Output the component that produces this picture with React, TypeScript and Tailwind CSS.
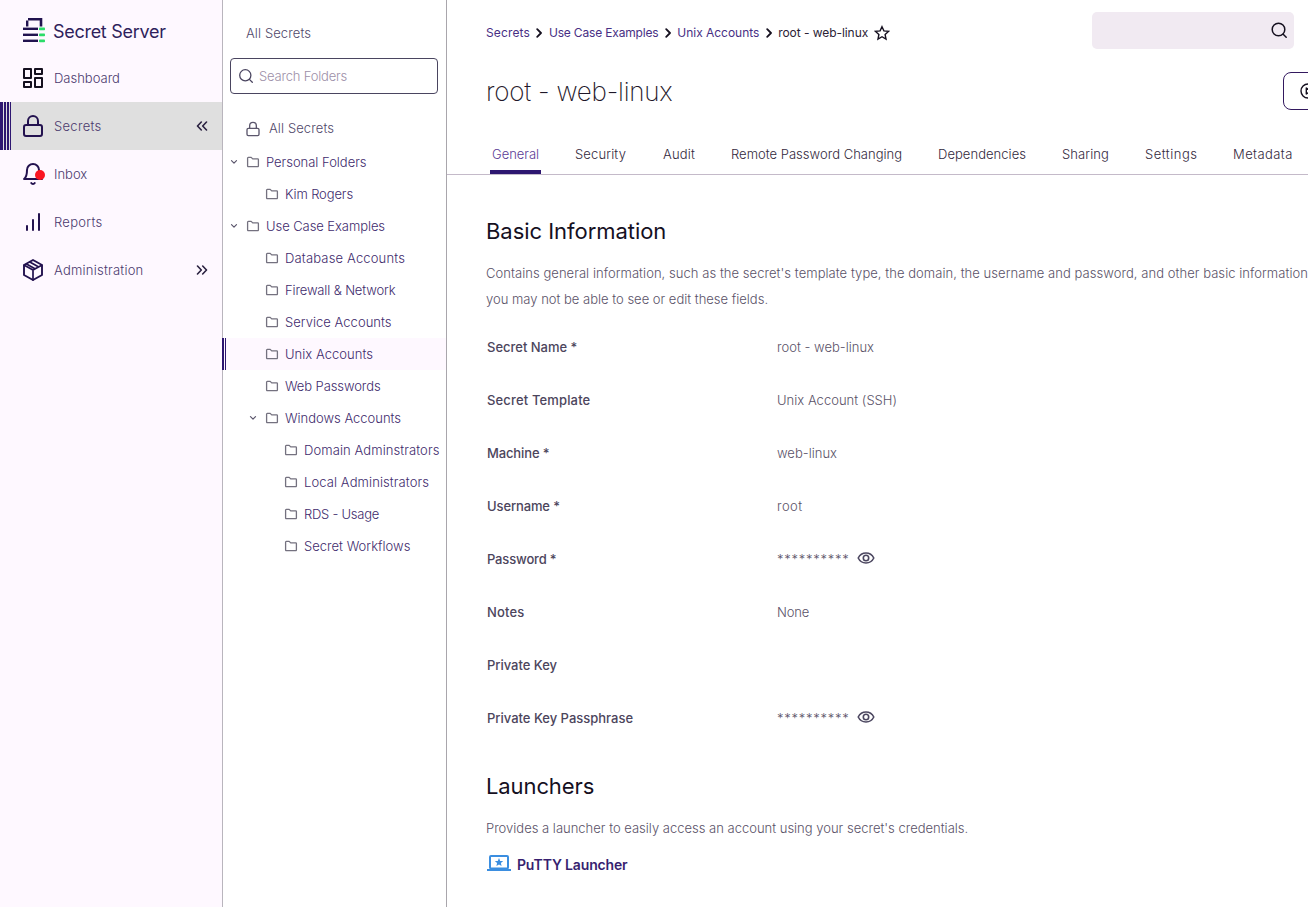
import React from "react";

type IconProps = { className?: string; children: React.ReactNode; box?: string };

function Icon({ className = "", children, box = "0 0 24 24" }: IconProps) {
  return (
    <svg
      viewBox={box}
      fill="none"
      stroke="currentColor"
      strokeWidth={2}
      strokeLinecap="round"
      strokeLinejoin="round"
      className={`shrink-0 ${className}`}
    >
      {children}
    </svg>
  );
}

const lockShape = (
  <>
    <rect x="3" y="11" width="18" height="11" rx="2" />
    <path d="M7 11V7a5 5 0 0 1 10 0v4" />
  </>
);

function Logo() {
  return (
    <svg viewBox="0 0 24 26" className="h-[26px] w-6 shrink-0">
      <g fill="#21124f">
        <path d="M7 0H21.300V8.500H18.700V2.500H7Z" />
        <rect x="5" y="2.500" width="2.400" height="6" />
        <rect x="2" y="9.600" width="15" height="2.400" />
        <rect x="2" y="15.600" width="15" height="2.400" />
        <rect x="2" y="21.600" width="15" height="2.400" />
      </g>
      <g fill="#2bdc69">
        <rect x="18" y="9.400" width="6" height="2.800" rx="0.800" />
        <rect x="18" y="15.400" width="6" height="2.800" rx="0.800" />
        <rect x="18" y="21.400" width="6" height="2.800" rx="0.800" />
      </g>
    </svg>
  );
}

type NavItem = { label: string; tracking: string; icon: React.ReactNode; active?: boolean; arrow?: "left" | "right"; dark?: boolean; dot?: boolean };

const navItems: NavItem[] = [
  {
    label: "Dashboard",
    tracking: "tracking-normal",
    dark: true,
    icon: (
      <g>
        <rect x="3" y="3" width="7" height="9" />
        <rect x="14" y="3" width="7" height="5" />
        <rect x="14" y="12" width="7" height="9" />
        <rect x="3" y="16" width="7" height="5" />
      </g>
    ),
  },
  { label: "Secrets", tracking: "tracking-[0.29px]", icon: lockShape, active: true, arrow: "left" },
  {
    label: "Inbox",
    tracking: "tracking-normal",
    dot: true,
    icon: (
      <>
        <path d="M18 8A6 6 0 0 0 6 8c0 7-3 9-3 9h18s-3-2-3-9" />
        <path d="M13.73 21a2 2 0 0 1-3.46 0" />
      </>
    ),
  },
  { label: "Reports", tracking: "tracking-[0.29px]", icon: <path d="M12 20V10M18 20V4M6 20v-4" /> },
  {
    label: "Administration",
    tracking: "tracking-[0.23px]",
    arrow: "right",
    icon: (
      <>
        <path strokeWidth={1.900} d="M12 2l9 5v10l-9 5-9-5V7z" />
        <path strokeWidth={1.700} d="M3.300 7.200L12 12l8.700-4.800M12 22V12M8.800 4l8.500 4.700M5.500 5.900l8.500 4.800" />
      </>
    ),
  },
];

function Sidebar() {
  return (
    <nav className="flex w-[223px] shrink-0 flex-col border-r border-[#b9b5bd] bg-[#fef8ff]">
      <div className="flex h-[54px] items-center pt-2 pl-[21px]">
        <Logo />
        <span className="pl-2 text-[18px] tracking-[-0.29px] text-[#2f1f5c]">Secret Server</span>
      </div>
      {navItems.map((n) => (
        <div key={n.label} className={`flex h-12 items-center ${n.active ? "bg-[#dfdfdf]" : ""}`}>
          <div className="flex w-[21px] self-stretch">
            {n.active && (
              <>
                <i className="mr-px w-[3px] bg-[#2d1670]" />
                <i className="mr-px w-[2px] bg-[#2d1670]" />
                <i className="mr-px w-[2px] bg-[#2d1670]" />
                <i className="w-px bg-[#2d1670]" />
              </>
            )}
          </div>
          <div className="relative">
            <Icon className={`size-6 ${n.dark ? "text-[#15101f]" : "text-[#23124f]"}`}>{n.icon}</Icon>
            {n.dot && <span className="absolute top-2 left-[14px] size-[10px] rounded-full bg-[#fb1622]" />}
          </div>
          <span className={`flex-1 pt-0.5 pl-[9px] text-[13px] font-light text-[#4b3a6e] ${n.tracking}`}>{n.label}</span>
          {n.arrow && (
            <Icon className="mr-[14px] h-[10px] w-3 text-[#2a2140]" box="0 0 12 10">
              <path
                strokeWidth={1.6}
                d={n.arrow === "left" ? "M5.300 1L1.500 5l3.800 4M10.500 1L6.700 5l3.800 4" : "M1.500 1l3.800 4-3.800 4M6.700 1l3.800 4-3.800 4"}
              />
            </Icon>
          )}
        </div>
      ))}
    </nav>
  );
}

type Folder = { label: string; tracking: string; indent: string; open?: boolean; active?: boolean };

const folders: Folder[] = [
  { label: "Personal Folders", tracking: "tracking-[-0.02px]", indent: "pl-[5px]", open: true },
  { label: "Kim Rogers", tracking: "tracking-[-0.12px]", indent: "pl-[24px]" },
  { label: "Use Case Examples", tracking: "tracking-[-0.07px]", indent: "pl-[5px]", open: true },
  { label: "Database Accounts", tracking: "tracking-[0.16px]", indent: "pl-[24px]" },
  { label: "Firewall & Network", tracking: "tracking-[-0.14px]", indent: "pl-[24px]" },
  { label: "Service Accounts", tracking: "tracking-[0.03px]", indent: "pl-[24px]" },
  { label: "Unix Accounts", tracking: "tracking-[0.04px]", indent: "pl-[24px]", active: true },
  { label: "Web Passwords", tracking: "tracking-[-0.09px]", indent: "pl-[24px]" },
  { label: "Windows Accounts", tracking: "tracking-[-0.01px]", indent: "pl-[24px]", open: true },
  { label: "Domain Adminstrators", tracking: "tracking-[0.09px]", indent: "pl-[43px]" },
  { label: "Local Administrators", tracking: "tracking-[0.1px]", indent: "pl-[43px]" },
  { label: "RDS - Usage", tracking: "tracking-[-0.25px]", indent: "pl-[43px]" },
  { label: "Secret Workflows", tracking: "tracking-[0.02px]", indent: "pl-[43px]" },
];

function FolderTree() {
  return (
    <aside className="flex w-[224px] shrink-0 flex-col border-r border-[#a9a6ac] text-[13px] font-light">
      <div className="flex h-[58px] items-center pt-[9px] pl-[23px] tracking-[0.1px] text-[#51486a]">All Secrets</div>
      <div className="mr-2 ml-[7px] flex h-9 items-center rounded-[4px] border border-[#4a4560] pl-2">
        <Icon className="size-[14px] text-[#4a4560]" box="0 0 14 14">
          <circle strokeWidth={1.300} cx="6.300" cy="6.300" r="5.600" />
          <path strokeWidth={1.300} d="M10.400 10.400l2.900 2.900" />
        </Icon>
        <span className="pt-0.5 pl-[6px] tracking-[-0.19px] text-[#9d8fa8]">Search Folders</span>
      </div>
      <div className="mt-[18px] flex h-[34px] items-center pl-[22px] text-[#51486a]">
        <Icon className="-mt-px size-4 text-[#5b566c]">{lockShape}</Icon>
        <span className="pl-2 tracking-[0.1px]">All Secrets</span>
      </div>
      {folders.map((f) => (
        <div key={f.label} className={`relative flex h-8 items-center ${f.indent} ${f.active ? "bg-[#fef8ff]" : ""}`}>
          {f.active && (
            <span className="absolute inset-y-0 -left-px flex">
              <i className="w-[2px] bg-[#2d1670]" />
              <i className="ml-px w-px bg-[#2d1670]" />
            </span>
          )}
          <div className="w-[18px]">
            {f.open && (
              <Icon className="ml-[2px] size-2 text-[#5b566c]" box="0 0 8 8">
                <path strokeWidth={1.2} d="M1.500 2.700L4 5.200l2.500-2.500" />
              </Icon>
            )}
          </div>
          <Icon className="-mt-px h-3 w-[14px] text-[#74717f]" box="0 0 14 12">
            <path strokeWidth={1.300} strokeLinejoin="round" d="M1.600 10V2.100a.7.7 0 0 1 .7-.7h2.900l1.500 1.500h5a.7.7 0 0 1 .7.7V10a.7.7 0 0 1-.7.7H2.300a.7.7 0 0 1-.7-.7z" />
          </Icon>
          <span className={`pt-0.5 pl-[6px] whitespace-nowrap text-[#412b6d] ${f.tracking}`}>{f.label}</span>
        </div>
      ))}
    </aside>
  );
}

const crumbs = [
  { label: "Secrets", tracking: "tracking-[0.14px]" },
  { label: "Use Case Examples", tracking: "tracking-[-0.17px]" },
  { label: "Unix Accounts", tracking: "tracking-[-0.03px]" },
];

const tabs = [
  { label: "General", style: "tracking-[-0.03px] w-[47px]" },
  { label: "Security", style: "tracking-[0.14px] w-[52px]" },
  { label: "Audit", style: "tracking-[0.17px] w-[32px]" },
  { label: "Remote Password Changing", style: "tracking-[0.02px] w-[171px]" },
  { label: "Dependencies", style: "tracking-[0.05px] w-[88px]" },
  { label: "Sharing", style: "tracking-[0.09px] w-[47px]" },
  { label: "Settings", style: "tracking-[0.5px] w-[52px]" },
  { label: "Metadata", style: "tracking-[0.42px] w-[60px]" },
];

const fields = [
  { label: "Secret Name *", lt: "tracking-[-0.01px]", value: "root - web-linux", vt: "tracking-[0.01px]" },
  { label: "Secret Template", lt: "tracking-[0.15px]", value: "Unix Account (SSH)", vt: "tracking-[0.02px]" },
  { label: "Machine *", lt: "tracking-[-0.13px]", value: "web-linux", vt: "tracking-[0.01px]" },
  { label: "Username *", lt: "tracking-[-0.12px]", value: "root", vt: "tracking-[0.44px]" },
  { label: "Password *", lt: "tracking-[-0.17px]", value: "**********", vt: "tracking-[0.75px]", masked: true },
  { label: "Notes", lt: "tracking-[0.18px]", value: "None", vt: "tracking-[-0.19px]" },
  { label: "Private Key", lt: "tracking-[-0.03px]", value: "", vt: "" },
  { label: "Private Key Passphrase", lt: "tracking-[-0.01px]", value: "**********", vt: "tracking-[0.75px]", masked: true },
];

function EyeIcon() {
  return (
    <Icon className="-mt-[3px] ml-[7px] h-3 w-[18px] text-[#4c4760]" box="0 0 18 12">
      <path strokeWidth={1.600} d="M1.200 6C2.800 2.800 5.600 1 9 1s6.200 1.800 7.800 5C15.200 9.200 12.400 11 9 11S2.800 9.200 1.200 6z" />
      <circle strokeWidth={1.600} cx="9" cy="6" r="2.700" />
    </Icon>
  );
}

function Header() {
  return (
    <header className="flex h-[61px] items-start justify-between pr-[14px] pl-[39px]">
      <div className="flex h-[66px] items-center text-[12px] whitespace-nowrap">
        {crumbs.map((c) => (
          <React.Fragment key={c.label}>
            <span className={`text-[#482f84] ${c.tracking}`}>{c.label}</span>
            <Icon className="mr-[6px] ml-[6.400px] h-[10px] w-[6.500px] text-[#15101f]" box="0 0 6.500 10">
              <path strokeWidth={1.800} d="M1.200 1.200L5 5 1.200 8.800" />
            </Icon>
          </React.Fragment>
        ))}
        <span className="tracking-[-0.06px] text-[#2b2235]">root - web-linux</span>
        <Icon className="ml-[6px] size-4 text-[#15101f]" box="0 0 16 16">
          <path strokeWidth={1.400} strokeLinejoin="miter" d="M8 1.700l1.900 4.200 4.600.5-3.400 3.100.9 4.500L8 11.700 4 14l.9-4.500L1.500 6.400l4.600-.5z" />
        </Icon>
      </div>
      <div className="mt-3 flex h-[37px] w-[202px] items-center justify-end rounded-[5px] bg-[#f1eaf2] pr-[6px]">
        <Icon className="-mt-px size-[18px] text-[#15101f]" box="0 0 18 18">
          <circle strokeWidth={1.500} cx="8.500" cy="8.500" r="6.300" />
          <path strokeWidth={1.500} d="M13.200 13.200l3 3" />
        </Icon>
      </div>
    </header>
  );
}

function Main() {
  return (
    <main className="w-[861px] shrink-0 overflow-hidden">
      <Header />
      <div className="flex h-[114px] flex-col border-b border-[#c4bac9]">
        <div className="flex h-[60px] items-center justify-between pl-[39px]">
          <h1 className="text-[26px] font-extralight tracking-[-0.24px] text-[#1e1729]">root - web-linux</h1>
          <div className="-mt-px h-[38px] w-[25px] overflow-hidden">
            <button className="flex h-[38px] w-[120px] items-center rounded-[8px] border border-[#33195f] pl-4">
              <Icon className="size-4 text-[#15101f]" box="0 0 16 16">
                <circle strokeWidth={1.400} cx="8" cy="8" r="7" />
                <path strokeWidth={1.400} d="M6.300 5v6l4.500-3z" />
              </Icon>
            </button>
          </div>
        </div>
        <div className="flex flex-1 gap-[36px] pl-[45px] text-[13px] font-light text-[#33293d]">
          {tabs.map((t, i) => (
            <div key={t.label} className={`flex shrink-0 flex-col justify-between whitespace-nowrap ${t.style} ${i === 0 ? "text-[#5b3b96]" : ""}`}>
              <span className="pt-[23px] leading-5">{t.label}</span>
              {i === 0 && <i className="-mx-[2px] h-1 bg-[#2d1670]" />}
            </div>
          ))}
        </div>
      </div>
      <section className="pl-[39px]">
        <h2 className="pt-[41px] text-[22px] leading-[30px] tracking-[-0.04px] text-[#15101f]">Basic Information</h2>
        <p className="mt-[14px] text-[13px] leading-[26px] font-light whitespace-nowrap text-[#5a5268]">
          <span className="tracking-[0.052px]">
            Contains general information, such as the secret's template type, the domain, the username and password, and other basic information
          </span>
          <br />
          you may not be able to see or edit these fields.
        </p>
        <dl className="mt-[9px] text-[13px]">
          {fields.map((f) => (
            <div key={f.label} className="flex h-[53px] items-center pl-px">
              <dt className={`w-[290px] font-medium text-[#4c455c] ${f.lt}`}>{f.label}</dt>
              <dd className={`flex items-center font-light text-[#5a5268] ${f.vt}`}>
                <span>{f.value}</span>
                {f.masked && <EyeIcon />}
              </dd>
            </div>
          ))}
        </dl>
        <h2 className="pt-[26px] text-[22px] leading-[30px] tracking-[-0.1px] text-[#15101f]">Launchers</h2>
        <p className="mt-[14px] text-[13px] leading-[26px] font-light whitespace-nowrap text-[#5a5268]">
          Provides a launcher to easily access an account using your secret's credentials.
        </p>
        <a className="mt-[11px] flex h-6 items-center pl-px">
          <svg viewBox="0 0 24 16" className="-mt-[3px] h-4 w-6 shrink-0">
            <rect x="3" y="1" width="18" height="12.500" rx="1" fill="none" stroke="#3b8ee0" strokeWidth="2" />
            <rect x="0" y="14" width="24" height="2" fill="#3b8ee0" />
            <path d="M12 3l1.200 2.900 3 .2-2.300 2 .7 3L12 9.500l-2.600 1.600.7-3-2.300-2 3-.2z" fill="#3b8ee0" />
          </svg>
          <span className="pl-[6px] text-[14px] font-semibold tracking-[-0.16px] text-[#371f70]">PuTTY Launcher</span>
        </a>
      </section>
    </main>
  );
}

export default function App() {
  return (
    <div className="flex h-[907px] w-[1308px] overflow-hidden bg-white font-['Inter',sans-serif]">
      <Sidebar />
      <FolderTree />
      <Main />
    </div>
  );
}
